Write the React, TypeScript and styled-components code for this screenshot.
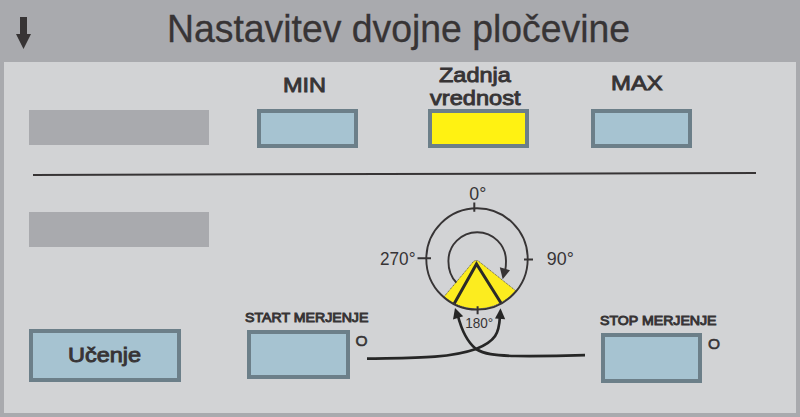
import React from "react";
import styled, { createGlobalStyle } from "styled-components";

const ink = "#373435";

const GlobalStyle = createGlobalStyle`
  * { box-sizing: border-box; }
  body {
    margin: 0;
    overflow: hidden;
    font-family: "Liberation Sans", Arial, sans-serif;
    color: ${ink};
  }
`;

const Screen = styled.div`
  display: flex;
  flex-direction: column;
  width: 800px;
  height: 417px;
  padding: 0 4px 4px;
  background: #a9aaae;
`;

const Header = styled.header`
  display: flex;
  align-items: flex-start;
  height: 61.5px;
  flex: none;
  padding: 17px 0 0 12px;
`;

const Title = styled.h1`
  margin: -10px 0 0 135.5px;
  font-size: 38px;
  line-height: 44px;
  font-weight: 400;
  white-space: nowrap;
  -webkit-text-stroke: 0.3px ${ink};
  transform: scaleX(0.983);
  transform-origin: left;
`;

const Panel = styled.main`
  display: flex;
  flex-direction: column;
  flex: 1;
  min-height: 0;
  background: #d2d3d5;
`;

const ValuesRow = styled.section`
  display: flex;
  align-items: flex-end;
  height: 86px;
  padding-left: 24.5px;
`;

const Placeholder = styled.div<{ $bottom?: number }>`
  flex: none;
  width: 180px;
  height: 35px;
  margin-bottom: ${(p) => p.$bottom ?? 0}px;
  background: #a9aaae;
`;

const Field = styled.div<{ $left: number; $width: number; $top?: number }>`
  display: flex;
  flex-direction: column;
  flex: none;
  align-items: flex-start;
  width: ${(p) => p.$width}px;
  margin-left: ${(p) => p.$left}px;
  margin-top: ${(p) => p.$top ?? 0}px;
`;

const Label = styled.span<{
  $size?: number;
  $line?: number;
  $stretch?: number;
  $left?: number;
  $bottom?: number;
}>`
  display: block;
  margin-left: ${(p) => p.$left ?? 0}px;
  margin-bottom: ${(p) => p.$bottom ?? 0}px;
  font-size: ${(p) => p.$size ?? 20.8}px;
  line-height: ${(p) => p.$line ?? 23.5}px;
  white-space: nowrap;
  -webkit-text-stroke: 0.9px ${ink};
  transform: scaleX(${(p) => p.$stretch ?? 1.13});
  transform-origin: left;
`;

const ValueBox = styled.div<{ $height: number; $active?: boolean }>`
  width: 100%;
  height: ${(p) => p.$height}px;
  border: 4px solid #6c7f89;
  background: ${(p) => (p.$active ? "#fff212" : "#a6c3d1")};
`;

const Divider = styled.hr`
  flex: none;
  width: 723px;
  height: 2.3px;
  margin: 25px 0 0 29px;
  border: 0;
  background: ${ink};
  transform: rotate(-0.15deg);
`;

const AngleRow = styled.section`
  display: flex;
  align-items: flex-start;
  flex: 1;
  padding-left: 25px;
`;

const SideColumn = styled.div`
  display: flex;
  flex-direction: column;
  width: 180px;
  padding-top: 37px;
`;

const LearnButton = styled.button`
  display: flex;
  align-items: center;
  width: 151.5px;
  height: 53px;
  padding: 0 0 3px 35px;
  border: 4px solid #6c7f89;
  background: #a6c3d1;
  color: inherit;
  font-family: inherit;
`;

const Unit = styled.span<{ $left: number; $top: number }>`
  flex: none;
  width: 12px;
  margin: ${(p) => p.$top}px 0 0 ${(p) => p.$left}px;
  font-size: 15.5px;
  line-height: 18px;
  -webkit-text-stroke: 0.6px ${ink};
`;

const Dial = styled.svg`
  flex: none;
  width: 218px;
  height: 190px;
  margin: 5px 0 0 -1px;
  overflow: visible;
  font-family: "Liberation Sans", Arial, sans-serif;
`;

const DownArrow = () => (
  <svg width="15" height="32" viewBox="0 0 15 32">
    <path d="M4 0H11V17H15L7.5 32L0 17H4Z" fill={ink} />
  </svg>
);

const AngleDial = () => (
  <Dial viewBox="367 180 218 190">
    <path
      d="M444 296.7L473.5 261.5Q476.5 259.5 479 261.5L515.7 290.7A50.8 50.8 0 0 1 444 296.7Z"
      fill="#fcec1f"
      stroke={ink}
      strokeWidth="0.7"
      strokeDasharray="1.2 0.8"
    />
    <circle cx="477" cy="258.9" r="50.7" fill="none" stroke={ink} strokeWidth="1.9" />
    <path
      d="M474.3 202.5V211.7M417.5 258.3H431M524 259.6H533M477.6 306.3V314.3"
      stroke={ink}
      strokeWidth="2"
    />
    <path
      d="M456.3 282.5C451 277 448.4 269 448.4 261A28.8 28.8 0 0 1 506 261Q506 266 505.3 270"
      fill="none"
      stroke={ink}
      strokeWidth="1.9"
    />
    <path d="M499.8 267.3L510 270.2L502.7 279.3Z" fill={ink} />
    <path d="M454.3 303.5L476.5 264L501 303" fill="none" stroke="#2b2a29" strokeWidth="3" />
    <g fill="none" stroke="#262626" strokeWidth="2.7">
      <path d="M367 358.7C410 357.8 447 359 476 349C496 341 499 333 499.9 317" />
      <path d="M585 355.2C558 356 536 356.2 515 356C494 355.4 484 354 476 349C466 341 461 328 457.7 315" />
    </g>
    <path d="M500.5 308.3L505.2 319.2L495 318.5Z" fill="#262626" />
    <path d="M455 308L463.2 316.3L453 319.5Z" fill="#262626" />
    <g fill={ink} fontSize="18">
      <text x="469.3" y="200" textLength="17" lengthAdjust="spacingAndGlyphs">0°</text>
      <text x="380" y="265.2" textLength="35.5" lengthAdjust="spacingAndGlyphs">270°</text>
      <text x="546.8" y="265" textLength="27" lengthAdjust="spacingAndGlyphs">90°</text>
      <text x="465.3" y="328.2" fontSize="14" textLength="28" lengthAdjust="spacingAndGlyphs">180°</text>
    </g>
  </Dial>
);

export default function App() {
  return (
    <>
      <GlobalStyle />
      <Screen>
        <Header>
          <DownArrow />
          <Title>Nastavitev dvojne pločevine</Title>
        </Header>
        <Panel>
          <ValuesRow>
            <Placeholder $bottom={2.5} />
            <Field $left={48.5} $width={100.5}>
              <Label $left={26} $bottom={12}>MIN</Label>
              <ValueBox $height={39} />
            </Field>
            <Field $left={70.5} $width={100.5}>
              <Label $left={10.5}>Zadnja</Label>
              <Label $left={2} $bottom={-1} $stretch={1.135}>vrednost</Label>
              <ValueBox $height={39} $active />
            </Field>
            <Field $left={62.5} $width={101}>
              <Label $left={19.5} $bottom={14} $stretch={1.15}>MAX</Label>
              <ValueBox $height={39} />
            </Field>
          </ValuesRow>
          <Divider />
          <AngleRow>
            <SideColumn>
              <Placeholder $bottom={82.5} />
              <LearnButton>
                <Label $stretch={1.13}>Učenje</Label>
              </LearnButton>
            </SideColumn>
            <Field $left={38} $width={102.5} $top={135}>
              <Label $size={12.8} $line={16} $left={-2.5} $bottom={4} $stretch={1.105}>START MERJENJE</Label>
              <ValueBox $height={49} />
            </Field>
            <Unit $left={6} $top={157}>O</Unit>
            <AngleDial />
            <Field $left={16} $width={101} $top={138}>
              <Label $size={12.8} $line={16} $left={-0.5} $bottom={4} $stretch={1.105}>STOP MERJENJE</Label>
              <ValueBox $height={50} />
            </Field>
            <Unit $left={6.5} $top={160}>O</Unit>
          </AngleRow>
        </Panel>
      </Screen>
    </>
  );
}
